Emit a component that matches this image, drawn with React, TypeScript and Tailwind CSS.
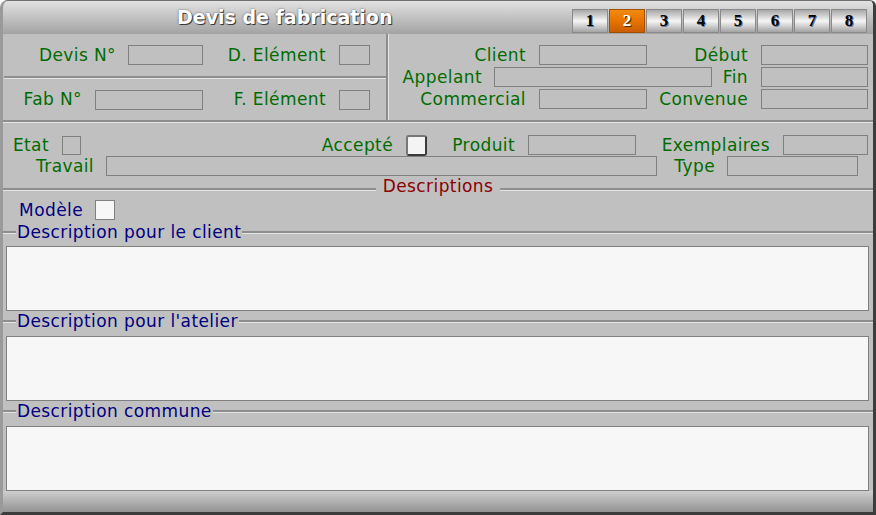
import React from "react";

const tabs = ["1", "2", "3", "4", "5", "6", "7", "8"];

const Field = ({ w, h = "h-[20px]", ml = "ml-[13px]" }: { w: string; h?: string; ml?: string }) => (
  <div className={`${w} ${h} ${ml} border border-[#808080] shrink-0`} />
);

const Label = ({ w, children, color = "text-[#006c00]" }: { w?: string; children: React.ReactNode; color?: string }) => (
  <span className={`${w ?? ""} ${color} text-right shrink-0 whitespace-nowrap leading-none`}>{children}</span>
);

const Groove = () => (
  <div className="h-[3px] border-t-2 border-[#8e8e8e] border-b border-b-[#e4e4e4] flex-1" />
);

const Group = ({ title, gap }: { title: string; gap: string }) => (
  <div className="flex flex-col">
    <div className="h-[20px] flex items-center">
      <div className="w-[13px] h-[3px] border-t-2 border-[#8e8e8e] border-b border-b-[#e4e4e4]" />
      <span className="text-[#000080] px-[1px] leading-none whitespace-nowrap">{title}</span>
      <Groove />
    </div>
    <div className={`${gap} ml-[3px] mr-[4px] h-[65px] bg-[#f7f7f7] border border-[#808080]`} />
  </div>
);

export default function App() {
  return (
    <div className="w-[876px] h-[515px] bg-white font-['DejaVu_Sans',sans-serif] text-[17px] tracking-[0.4px]">
      <div className="w-[876px] h-[515px] bg-[#c0c0c0] rounded-tl-[8px] rounded-tr-[6px] border-l-[3px] border-l-[#9a9a9a] border-r-[3px] border-r-[#3c3c3c] border-b-[3px] border-b-[#3c3c3c] border-t border-t-[#6e6e6e] overflow-hidden flex flex-col">
        {/* title bar */}
        <div className="h-[33px] shrink-0 bg-gradient-to-b from-[#e2e2e2] to-[#a3a3a3] flex items-center relative">
          <span className="ml-[174px] text-white font-bold text-[19px] tracking-normal [text-shadow:1px_1px_0_#3a3a3a,0_0_2px_#555]">
            Devis de fabrication
          </span>
          <div className="absolute left-[569px] top-[8px] flex gap-[1px] tracking-normal">
            {tabs.map((t) => (
              <div
                key={t}
                className={`w-[36px] h-[24px] flex items-center justify-center border font-['Liberation_Serif',serif] font-bold text-[17px] ${
                  t === "2"
                    ? "bg-gradient-to-b from-[#f08a10] via-[#e87400] to-[#c85e00] border-[#a05000] text-white [text-shadow:1px_1px_0_#552800]"
                    : "bg-gradient-to-b from-[#a8a8a8] via-[#f6f6f6] to-[#a4a4a4] border-[#8a8a8a] text-black [text-shadow:1px_1px_0_#5a7aa0]"
                }`}
              >
                {t}
              </div>
            ))}
          </div>
        </div>

        {/* top section */}
        <div className="h-[86px] shrink-0 flex pl-[1px]">
          <div className="w-[382px] flex flex-col">
            <div className="h-[42px] flex items-center">
              <Label w="w-[112px]">Devis N°</Label>
              <Field w="w-[75px]" ml="ml-[12px]" />
              <Label w="w-[123px]">D. Elément</Label>
              <Field w="w-[31px]" />
            </div>
            <div className="h-[3px] border-t-2 border-[#8e8e8e] border-b border-b-[#e4e4e4]" />
            <div className="flex-1 flex items-center">
              <Label w="w-[78px]">Fab N°</Label>
              <Field w="w-[108px]" />
              <Label w="w-[123px]">F. Elément</Label>
              <Field w="w-[31px]" />
            </div>
          </div>
          <div className="w-[3px] border-l-2 border-[#8e8e8e] border-r border-r-[#e4e4e4]" />
          <div className="flex-1 flex flex-col pt-[10px]">
            <div className="h-[22px] flex items-center">
              <Label w="w-[137px]">Client</Label>
              <Field w="w-[108px]" />
              <Label w="w-[101px]">Début</Label>
              <Field w="w-[107px]" />
            </div>
            <div className="h-[22px] flex items-center">
              <Label w="w-[93px]">Appelant</Label>
              <Field w="w-[218px]" ml="ml-[12px]" />
              <Label w="w-[36px]">Fin</Label>
              <Field w="w-[107px]" />
            </div>
            <div className="h-[22px] flex items-center">
              <Label w="w-[137px]">Commercial</Label>
              <Field w="w-[108px]" />
              <Label w="w-[101px]">Convenue</Label>
              <Field w="w-[107px]" />
            </div>
          </div>
        </div>

        <div className="h-[3px] shrink-0 border-t-2 border-[#8e8e8e] border-b border-b-[#e4e4e4]" />

        {/* middle section */}
        <div className="h-[57px] shrink-0 flex flex-col pt-[11px] pl-[1px]">
          <div className="h-[22px] flex items-center">
            <Label w="w-[45px]">Etat</Label>
            <Field w="w-[19px]" h="h-[19px]" />
            <Label w="w-[312px]">Accepté</Label>
            <div className="ml-[13px] w-[21px] h-[21px] bg-[#f4f4f4] border-2 border-[#3a3a3a] rounded-[3px] border-t-[#777] border-l-[#777]" />
            <Label w="w-[88px]">Produit</Label>
            <Field w="w-[108px]" />
            <Label w="w-[134px]">Exemplaires</Label>
            <Field w="w-[85px]" />
          </div>
          <div className="h-[20px] flex items-center">
            <Label w="w-[90px]">Travail</Label>
            <Field w="w-[551px]" ml="ml-[12px]" />
            <Label w="w-[58px]">Type</Label>
            <Field w="w-[131px]" ml="ml-[12px]" />
          </div>
        </div>

        {/* Descriptions separator */}
        <div className="h-[18px] shrink-0 flex items-center">
          <Groove />
          <span className="px-[7px] text-[#8b0000] leading-none -mt-[6px]">Descriptions</span>
          <Groove />
        </div>

        {/* Modèle */}
        <div className="h-[24px] shrink-0 flex items-center pl-[1px]">
          <Label w="w-[79px]" color="text-[#000080]">Modèle</Label>
          <div className="ml-[12px] w-[20px] h-[20px] bg-[#f7f7f7] border border-[#808080]" />
        </div>

        <Group title="Description pour le client" gap="mt-[4px]" />
        <Group title="Description pour l'atelier" gap="mt-[5px]" />
        <Group title="Description commune" gap="mt-[5px]" />

        <div className="mt-auto h-[21px] shrink-0 bg-gradient-to-b from-[#cfcfcf] to-[#939393]" />
      </div>
    </div>
  );
}
